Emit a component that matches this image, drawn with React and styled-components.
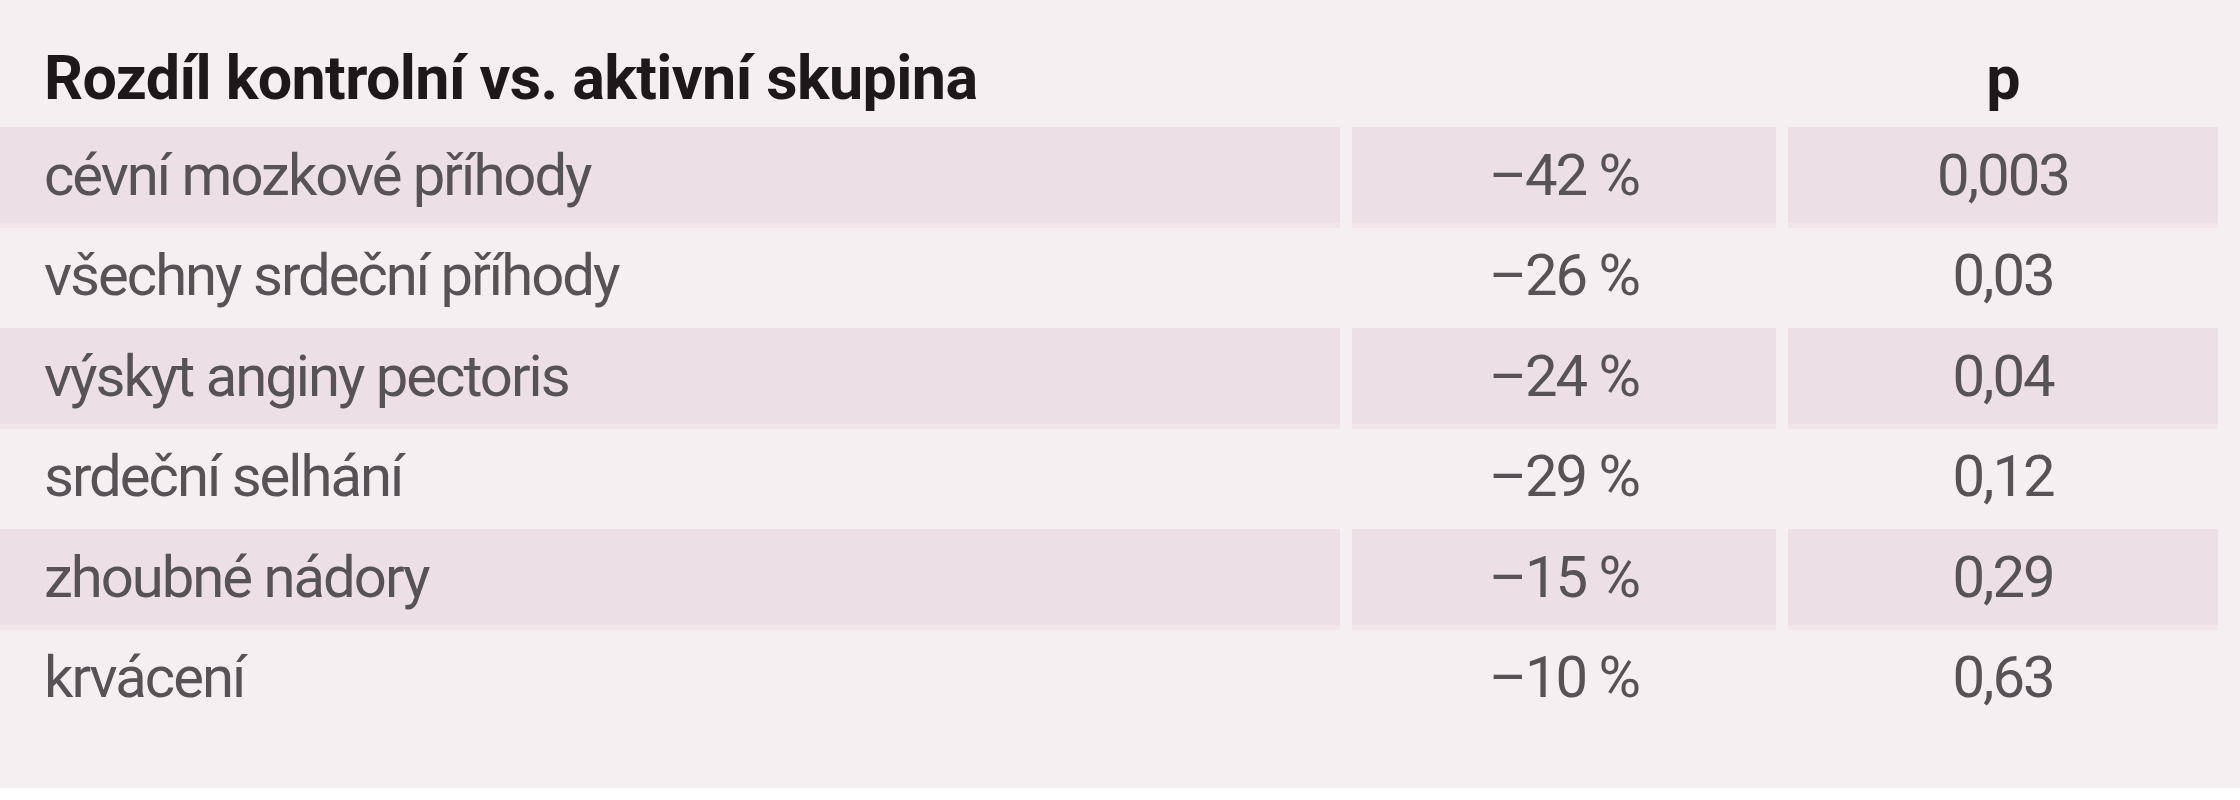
import React from "react";
import styled, { createGlobalStyle } from "styled-components";

const GlobalStyle = createGlobalStyle`
	html, body {
		margin: 0;
		padding: 0;
		background: #ffffff;
	}
`;

const rows = [
	{ label: "cévní mozkové příhody", diff: "–42 %", p: "0,003" },
	{ label: "všechny srdeční příhody", diff: "–26 %", p: "0,03" },
	{ label: "výskyt anginy pectoris", diff: "–24 %", p: "0,04" },
	{ label: "srdeční selhání", diff: "–29 %", p: "0,12" },
	{ label: "zhoubné nádory", diff: "–15 %", p: "0,29" },
	{ label: "krvácení", diff: "–10 %", p: "0,63" },
];

const Panel = styled.div`
	width: 2240px;
	height: 788px;
	box-sizing: border-box;
	padding-right: 22px;
	background: #f6eff2;
	font-family: Roboto, "Liberation Sans", sans-serif;
`;

const Grid = styled.div`
	display: grid;
	grid-template-columns: 1340px 424px 430px;
	grid-template-rows: 127px repeat(6, 100.5px);
	column-gap: 12px;
`;

const HeadCell = styled.div`
	display: flex;
	align-items: flex-end;
	justify-content: ${(p) => (p.$center ? "center" : "flex-start")};
	padding: 0 0 18px ${(p) => (p.$center ? "0" : "44px")};
	font-size: 61px;
	font-weight: 700;
	line-height: 1;
	letter-spacing: -0.6px;
	color: #1d191b;
`;

const Cell = styled.div`
	display: flex;
	align-items: center;
	justify-content: ${(p) => (p.$center ? "center" : "flex-start")};
	padding-left: ${(p) => (p.$center ? "0" : "44px")};
	box-sizing: border-box;
	font-size: 58px;
	line-height: 1;
	letter-spacing: -2px;
	color: #565255;
	background: ${(p) => (p.$shaded ? "#ecdfe5" : "transparent")};
	border-bottom: 5px solid ${(p) => (p.$shaded ? "#f2e6eb" : "transparent")};
`;

export default function App() {
	return (
		<>
			<GlobalStyle />
			<Panel>
				<Grid>
					<HeadCell>Rozdíl kontrolní vs. aktivní skupina</HeadCell>
					<HeadCell $center />
					<HeadCell $center>p</HeadCell>
					{rows.map((row, i) => {
						const shaded = i % 2 === 0;
						return (
							<React.Fragment key={row.label}>
								<Cell $shaded={shaded}>{row.label}</Cell>
								<Cell $shaded={shaded} $center>
									{row.diff}
								</Cell>
								<Cell $shaded={shaded} $center>
									{row.p}
								</Cell>
							</React.Fragment>
						);
					})}
				</Grid>
			</Panel>
		</>
	);
}
